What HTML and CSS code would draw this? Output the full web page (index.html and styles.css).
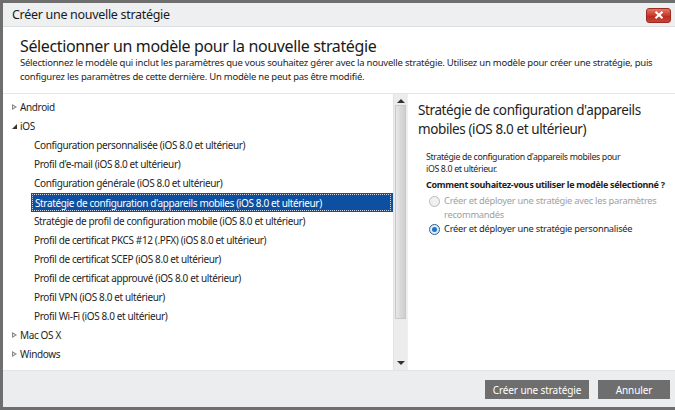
FILE: index.html
```html
<!DOCTYPE html>
<html lang="fr">
<head>
<meta charset="utf-8">
<link rel="stylesheet" href="styles.css">
</head>
<body>
<div class="window">
  <div class="titlebar">
    <span class="title">Créer une nouvelle stratégie</span>
    <button class="close" aria-label="Fermer">
      <svg width="10" height="8" viewBox="0 0 10 8"><path d="M1.5 0.8 L8.5 7.2 M8.5 0.8 L1.5 7.2" stroke="#fff" stroke-width="2.2"/></svg>
    </button>
  </div>
  <div class="header">
    <h1>Sélectionner un modèle pour la nouvelle stratégie</h1>
    <p>Sélectionnez le modèle qui inclut les paramètres que vous souhaitez gérer avec la nouvelle stratégie. Utilisez un modèle pour créer une stratégie, puis configurez les paramètres de cette dernière. Un modèle ne peut pas être modifié.</p>
  </div>
  <div class="main">
    <div class="tree">
      <div class="node"><span class="tri closed"></span>Android</div>
      <div class="node"><span class="tri open"></span>iOS</div>
      <div class="leaf">Configuration personnalisée (iOS 8.0 et ultérieur)</div>
      <div class="leaf">Profil d'e-mail (iOS 8.0 et ultérieur)</div>
      <div class="leaf">Configuration générale (iOS 8.0 et ultérieur)</div>
      <div class="leaf selected"><span class="focus">Stratégie de configuration d'appareils mobiles (iOS 8.0 et ultérieur)</span></div>
      <div class="leaf">Stratégie de profil de configuration mobile (iOS 8.0 et ultérieur)</div>
      <div class="leaf">Profil de certificat PKCS #12 (.PFX) (iOS 8.0 et ultérieur)</div>
      <div class="leaf">Profil de certificat SCEP (iOS 8.0 et ultérieur)</div>
      <div class="leaf">Profil de certificat approuvé (iOS 8.0 et ultérieur)</div>
      <div class="leaf">Profil VPN (iOS 8.0 et ultérieur)</div>
      <div class="leaf">Profil Wi-Fi (iOS 8.0 et ultérieur)</div>
      <div class="node"><span class="tri closed"></span>Mac OS X</div>
      <div class="node"><span class="tri closed"></span>Windows</div>
    </div>
    <div class="scrollbar">
      <div class="arrow up"></div>
      <div class="thumb"></div>
      <div class="track"></div>
      <div class="arrow down"></div>
    </div>
    <div class="details">
      <h2>Stratégie de configuration d'appareils mobiles (iOS 8.0 et ultérieur)</h2>
      <p class="desc">Stratégie de configuration d'appareils mobiles pour iOS 8.0 et ultérieur.</p>
      <p class="question">Comment souhaitez-vous utiliser le modèle sélectionné ?</p>
      <label class="radio disabled"><span class="dot"></span><span class="lbl">Créer et déployer une stratégie avec les paramètres recommandés</span></label>
      <label class="radio checked"><span class="dot"></span><span class="lbl">Créer et déployer une stratégie personnalisée</span></label>
    </div>
  </div>
  <div class="footer">
    <button class="btn">Créer une stratégie</button>
    <button class="btn">Annuler</button>
  </div>
</div>
</body>
</html>
```
FILE: styles.css
```css
* { box-sizing: border-box; }
html, body { margin: 0; padding: 0; }
body {
  background: #6e6e6e;
  font-family: "Segoe UI", "Noto Sans", "Open Sans", sans-serif;
  color: #1e1e1e;
  width: 675px;
  height: 410px;
  overflow: hidden;
}
.window {
  margin: 3px 0 0 3px;
  width: 672px;
  height: 404px;
  background: #fff;
  display: flex;
  flex-direction: column;
}
.titlebar {
  height: 24px;
  flex: none;
  background: #eeeff1;
  border-bottom: 1px solid #dedfe1;
  display: flex;
  align-items: center;
  justify-content: space-between;
  padding: 0 4px 0 9px;
}
.title { font-size: 12.5px; color: #1a1a1a; letter-spacing: -0.3px; }
.close {
  width: 25px;
  height: 15px;
  margin-top: 1px;
  border: 1px solid #9b2a20;
  border-radius: 3px;
  background: linear-gradient(#e0796a, #c9392a 50%, #b92a1c 51%, #c94538);
  display: flex;
  align-items: center;
  justify-content: center;
  padding: 0;
}
.header {
  flex: none;
  height: 67px;
  padding: 8px 10px 0 17px;
  border-bottom: 1px solid #e6e6e6;
}
h1 {
  margin: 0;
  font-weight: normal;
  font-size: 16px;
  line-height: 22px;
  color: #1a1a1a;
  letter-spacing: -0.37px;
}
.header p {
  margin: -1px 0 0;
  font-size: 9.5px;
  line-height: 14px;
  letter-spacing: -0.23px;
}
.main {
  flex: 1;
  display: flex;
  min-height: 0;
}
.tree {
  width: 390px;
  padding: 4px 0 0 0;
  font-size: 10px;
  letter-spacing: -0.37px;
}
.node, .leaf {
  height: 19px;
  line-height: 19px;
  white-space: nowrap;
}
.node { padding-left: 8px; display: flex; align-items: center; }
.leaf { padding-left: 31px; }
.tri { display: inline-block; width: 9px; height: 9px; position: relative; }
.tri.closed::before {
  content: ""; position: absolute; left: 1px; top: 1px;
  border-left: 5px solid #888; border-top: 3.5px solid transparent; border-bottom: 3.5px solid transparent;
}
.tri.closed::after {
  content: ""; position: absolute; left: 2px; top: 3px;
  border-left: 2.5px solid #fff; border-top: 1.5px solid transparent; border-bottom: 1.5px solid transparent;
}
.tri.open::before {
  content: ""; position: absolute; left: 1px; top: 2px;
  border-right: 5px solid #333; border-top: 5px solid transparent;
}
.leaf.selected {
  margin-left: 28px;
  padding-left: 1px;
  background: #0d50a1;
  color: #fff;
  padding-top: 1px;
  padding-right: 2px;
}
.focus {
  display: block;
  height: 17px;
  line-height: 16px;
  padding-left: 2px;
  border: 1px dotted #c9d6ea;
}
.scrollbar {
  width: 14px;
  flex: none;
  display: flex;
  flex-direction: column;
  background: #ececec;
  border-left: 1px solid #e2e2e2;
}
.arrow { height: 14px; flex: none; position: relative; }
.arrow.up::before {
  content: ""; position: absolute; left: 3px; top: 5px;
  border-bottom: 4px solid #333; border-left: 4px solid transparent; border-right: 4px solid transparent;
}
.arrow.down::before {
  content: ""; position: absolute; left: 3px; top: 5px;
  border-top: 4px solid #333; border-left: 4px solid transparent; border-right: 4px solid transparent;
}
.thumb {
  height: 214px;
  margin: -3px 1px 0;
  border: 1px solid #c8c8c8;
  background: linear-gradient(90deg, #e9e9e9, #d9d9d9 50%, #cfcfcf);
}
.track { flex: 1; }
.details {
  flex: 1;
  padding: 7px 10px 0 10px;
  border-left: 1px solid #f0f0f0;
}
h2 {
  margin: 0;
  font-weight: normal;
  font-size: 13.5px;
  line-height: 19px;
  color: #1e1e1e;
  letter-spacing: -0.4px;
}
.desc {
  margin: 12px 0 0 8px;
  font-size: 8.8px;
  line-height: 12px;
  letter-spacing: -0.35px;
  width: 200px;
}
.question {
  margin: 3px 0 0 8px;
  font-size: 9px;
  font-weight: bold;
  line-height: 14px;
  letter-spacing: -0.3px;
  white-space: nowrap;
}
.radio {
  display: flex;
  margin: 2px 0 0 11px;
  font-size: 9.3px;
  line-height: 14px;
  letter-spacing: -0.25px;
}
.radio .dot {
  flex: none;
  width: 11px;
  height: 11px;
  border-radius: 50%;
  margin: 2px 4px 0 0;
  border: 1px solid #b9b9b9;
  background: #f1f1f1;
  position: relative;
}
.radio.disabled { color: #a0a0a0; }
.radio.disabled .lbl { width: 218px; }
.radio.checked { margin-top: 0; }
.radio.checked .dot { border-color: #2f5d8a; background: #e4edf6; }
.radio.checked .dot::after {
  content: ""; position: absolute; left: 2px; top: 2px; width: 5px; height: 5px;
  border-radius: 50%; background: #1a76c9;
}
.footer {
  flex: none;
  height: 37px;
  background: #ecedef;
  border-top: 1px solid #e2e3e5;
  display: flex;
  justify-content: flex-end;
  align-items: center;
  gap: 9px;
  padding: 0 5px 0 0;
}
.btn {
  height: 19px;
  border: none;
  background: #6e6e6e;
  color: #fff;
  font-family: inherit;
  font-size: 10px;
  letter-spacing: -0.1px;
  padding: 0;
  margin-top: 1px;
}
.btn:first-child { width: 104px; }
.btn:last-child { width: 72px; }
```
